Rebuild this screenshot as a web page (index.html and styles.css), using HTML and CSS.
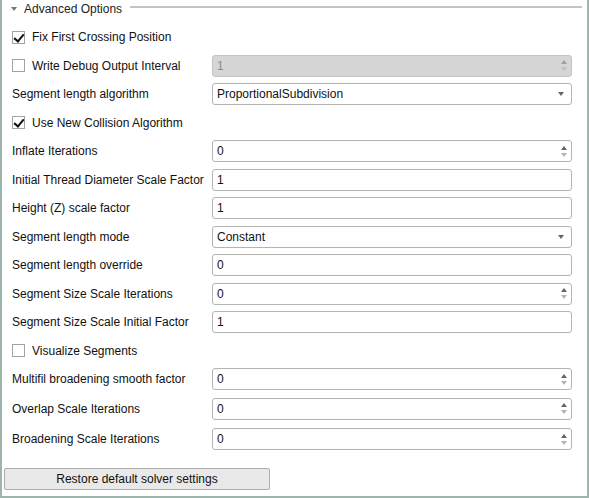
FILE: index.html
```html
<!DOCTYPE html>
<html lang="en">
<head>
<meta charset="UTF-8">
<title>Advanced Options</title>
<link rel="stylesheet" href="styles.css">
</head>
<body>
<div class="panel">
    <div class="group-head">
        <span class="caret"></span>
        <span class="group-title">Advanced Options</span>
        <span class="group-line"></span>
    </div>

    <div class="rows">
        <div class="row"><label class="check"><span class="box on"></span>Fix First Crossing Position</label></div>
        <div class="row">
            <label class="check"><span class="box"></span>Write Debug Output Interval</label>
            <div class="field spin disabled"><span class="val">1</span><span class="arrows"><i class="up"></i><i class="down"></i></span></div>
        </div>
        <div class="row">
            <span class="lbl">Segment length algorithm</span>
            <div class="field combo"><span class="val">ProportionalSubdivision</span><i class="drop"></i></div>
        </div>
        <div class="row"><label class="check"><span class="box on"></span>Use New Collision Algorithm</label></div>
        <div class="row">
            <span class="lbl">Inflate Iterations</span>
            <div class="field spin"><span class="val">0</span><span class="arrows"><i class="up"></i><i class="down"></i></span></div>
        </div>
        <div class="row">
            <span class="lbl">Initial Thread Diameter Scale Factor</span>
            <div class="field"><span class="val">1</span></div>
        </div>
        <div class="row">
            <span class="lbl">Height (Z) scale factor</span>
            <div class="field"><span class="val">1</span></div>
        </div>
        <div class="row">
            <span class="lbl">Segment length mode</span>
            <div class="field combo"><span class="val">Constant</span><i class="drop"></i></div>
        </div>
        <div class="row">
            <span class="lbl">Segment length override</span>
            <div class="field"><span class="val">0</span></div>
        </div>
        <div class="row">
            <span class="lbl">Segment Size Scale Iterations</span>
            <div class="field spin"><span class="val">0</span><span class="arrows"><i class="up"></i><i class="down"></i></span></div>
        </div>
        <div class="row">
            <span class="lbl">Segment Size Scale Initial Factor</span>
            <div class="field"><span class="val">1</span></div>
        </div>
        <div class="row"><label class="check"><span class="box"></span>Visualize Segments</label></div>
        <div class="row">
            <span class="lbl">Multifil broadening smooth factor</span>
            <div class="field spin"><span class="val">0</span><span class="arrows"><i class="up"></i><i class="down"></i></span></div>
        </div>
        <div class="row tall">
            <span class="lbl">Overlap Scale Iterations</span>
            <div class="field spin"><span class="val">0</span><span class="arrows"><i class="up"></i><i class="down"></i></span></div>
        </div>
        <div class="row taller">
            <span class="lbl">Broadening Scale Iterations</span>
            <div class="field spin"><span class="val">0</span><span class="arrows"><i class="up"></i><i class="down"></i></span></div>
        </div>
    </div>

    <div class="actions">
        <button class="btn">Restore default solver settings</button>
    </div>
</div>
</body>
</html>
```

FILE: styles.css
```css
* {
    padding: 0;
    margin: 0;
    box-sizing: border-box;
}

body {
    background-color: #fff;
    font-family: "Liberation Sans", Arial, sans-serif;
    font-size: 12px;
    color: #111;
}

.panel {
    width: 589px;
    height: 498px;
    border-left: 2px solid #9db5ac;
    border-right: 2px solid #9db5ac;
    border-bottom: 2px solid #9db5ac;
    position: relative;
}

/* group title with line */
.group-head {
    display: flex;
    align-items: center;
    height: 18px;
    padding-left: 9px;
    padding-right: 5px;
}

.caret {
    width: 0;
    height: 0;
    border-left: 3px solid transparent;
    border-right: 3px solid transparent;
    border-top: 4px solid #777;
    margin-right: 7px;
    margin-top: -1px;
}

.group-title {
    color: #222;
}

.group-line {
    flex: 1;
    height: 2px;
    background-color: #c3c3c3;
    margin-left: 8px;
    margin-top: -5px;
}

.rows {
    display: flex;
    flex-direction: column;
    padding: 5px 15px 0 10px;
}

.row {
    display: flex;
    align-items: center;
    height: 28.5px;
}

.row.tall {
    height: 30px;
}

.row.taller {
    height: 31px;
}

.lbl {
    width: 200px;
    flex: none;
}

.check {
    display: flex;
    align-items: center;
    width: 200px;
    flex: none;
}

.box {
    width: 13px;
    height: 13px;
    border: 1px solid #a3a3a3;
    background-color: #fff;
    margin-right: 7px;
    position: relative;
}

.box.on::after {
    content: "";
    position: absolute;
    left: 3px;
    top: 0;
    width: 4px;
    height: 8px;
    border-right: 2px solid #111;
    border-bottom: 2px solid #111;
    transform: rotate(40deg);
}

.field {
    flex: 1;
    height: 22px;
    border: 1px solid #b4b4b4;
    border-radius: 3px;
    background-color: #fff;
    display: flex;
    align-items: center;
    padding-left: 4px;
}

.field .val {
    flex: 1;
}

.field.disabled {
    background-color: #d6d6d6;
    border-color: #c3c3c3;
    color: #8a8a8a;
}

.arrows {
    width: 15px;
    height: 100%;
    display: flex;
    flex-direction: column;
    align-items: center;
    justify-content: center;
    gap: 3px;
}

.arrows i {
    width: 0;
    height: 0;
    border-left: 3px solid transparent;
    border-right: 3px solid transparent;
}

.arrows .up {
    border-bottom: 4px solid #666;
}

.arrows .down {
    border-top: 4px solid #b4b4b4;
}

.disabled .arrows .up {
    border-bottom-color: #a0a0a0;
}

.disabled .arrows .down {
    border-top-color: #c0c0c0;
}

.drop {
    width: 0;
    height: 0;
    border-left: 3.5px solid transparent;
    border-right: 3.5px solid transparent;
    border-top: 4px solid #666;
    margin-right: 7px;
}

.actions {
    padding: 13px 0 0 2px;
}

.btn {
    display: block;
    width: 266px;
    height: 22px;
    border: 1px solid #adadad;
    border-radius: 2px;
    background-color: #e9e9e9;
    font-family: "Liberation Sans", Arial, sans-serif;
    font-size: 12px;
    color: #111;
}
```
